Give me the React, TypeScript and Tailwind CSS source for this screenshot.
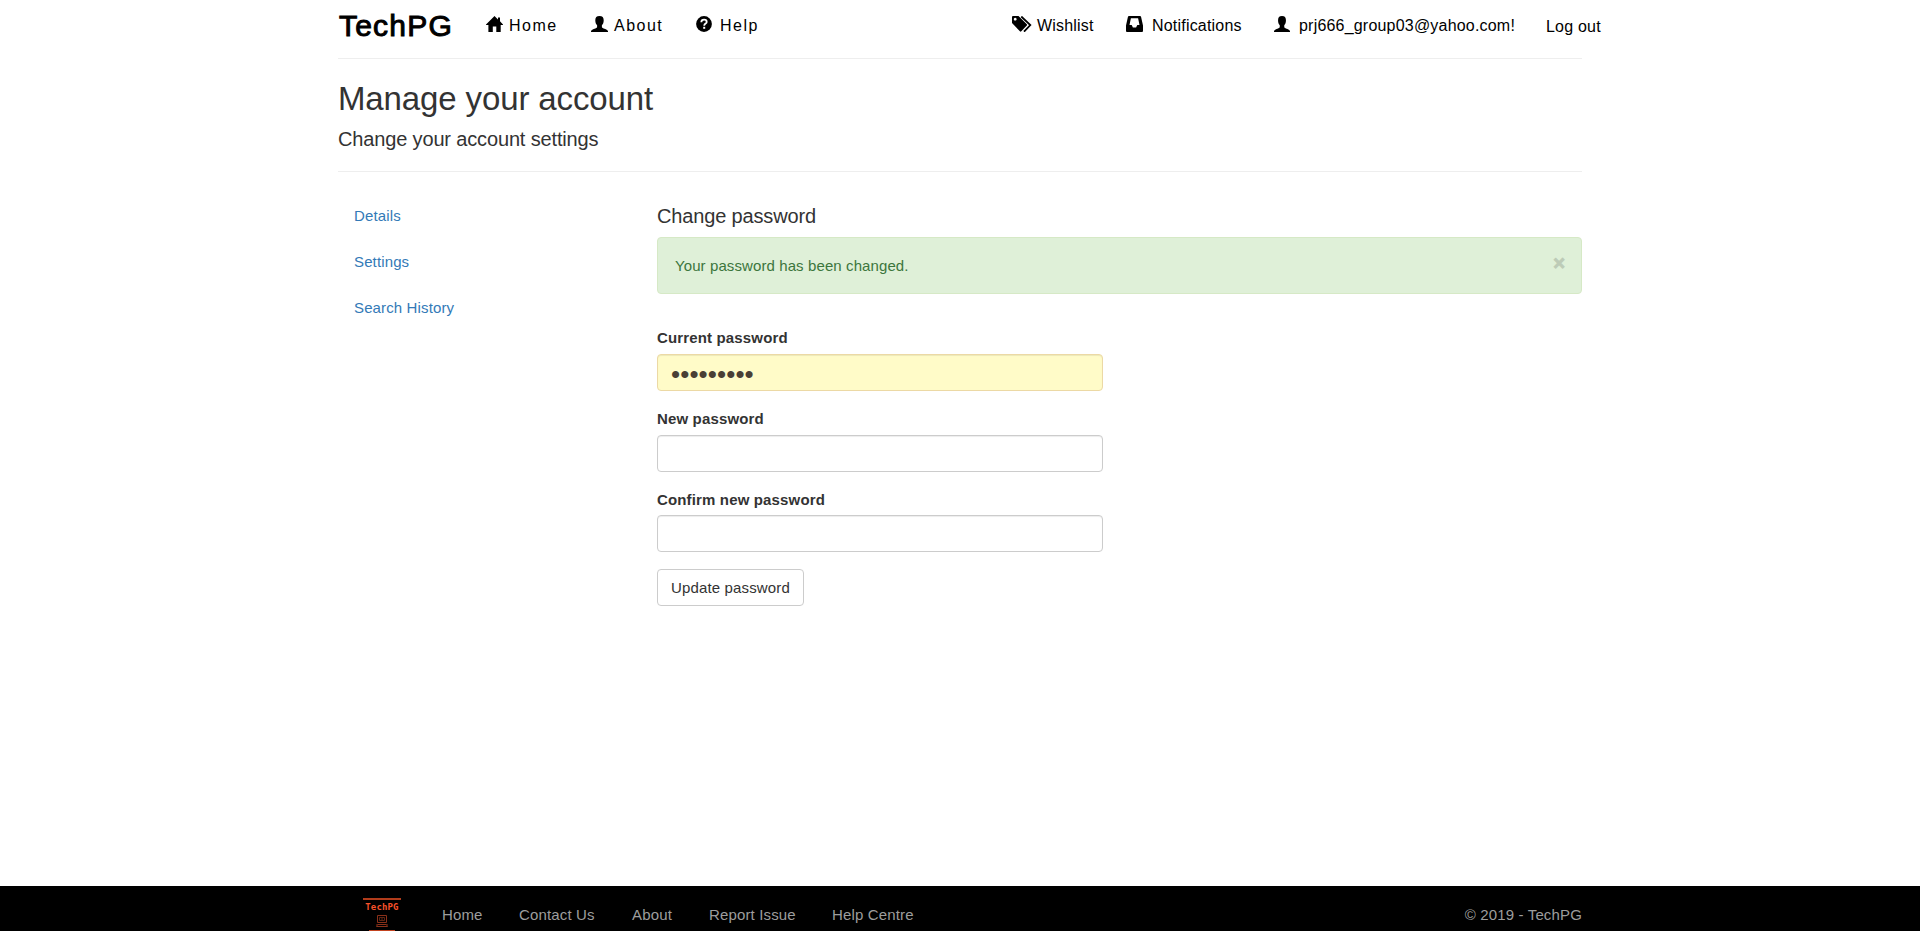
import React from "react";

type IconProps = { className?: string };

const HomeIcon = ({ className }: IconProps) => (
  <svg viewBox="0 0 17 16" className={className} fill="currentColor">
    <path d="M8.500 0 12 3.400V1.500H14V5.300L17 8.400V9H14.700V16H10.300V10.500H6.800V16H2.400V9H0V8.400Z" />
  </svg>
);

const UserIcon = ({ className }: IconProps) => (
  <svg viewBox="0 0 17 16" preserveAspectRatio="none" className={className} fill="currentColor">
    <path d="M8.500 0C11.500 0 12.700 1.600 12.700 4.200 12.700 6.500 12.100 8 10.900 9.300V11C10.900 11.600 11.600 12 12.600 12.400 15 13.200 17 14 17 15.200V16H0V15.200C0 14 2 13.200 4.400 12.400 5.400 12 6.100 11.600 6.100 11V9.300C4.900 8 4.300 6.500 4.300 4.200 4.300 1.600 5.500 0 8.500 0Z" />
  </svg>
);

const HelpIcon = ({ className }: IconProps) => (
  <svg viewBox="0 0 16 16" className={className}>
    <circle cx="8" cy="8" r="7.900" fill="currentColor" />
    <path d="M5.300 6.200C5.300 4.500 6.600 3.700 8.100 3.700 9.700 3.700 10.700 4.700 10.700 5.900 10.700 7.600 8.200 7.500 8.200 9.700" fill="none" stroke="#fff" strokeWidth="1.800" />
    <path d="M7.200 10.800h2v2h-2z" fill="#fff" />
  </svg>
);

const TagsIcon = ({ className }: IconProps) => (
  <svg viewBox="0 0 20 16" className={className}>
    <path fillRule="evenodd" fill="currentColor" d="M0 1Q0 0 1 0H6.500L14.800 8.200Q15.400 8.900 14.800 9.500L9.300 15.300Q8.600 16 7.900 15.300L0 7ZM3.200 1.800a1.400 1.400 0 1 0 .01 0Z" />
    <path d="M9.300 .500 18.300 9.100 12 15.700" fill="none" stroke="currentColor" strokeWidth="1.800" />
  </svg>
);

const InboxIcon = ({ className }: IconProps) => (
  <svg viewBox="0 0 17 16" preserveAspectRatio="none" className={className}>
    <path fillRule="evenodd" fill="currentColor" d="M3 0H14Q14.900 0 15.100 .900L17 9.500V15Q17 16 16 16H1Q0 16 0 15V9.500L1.900 .900Q2.100 0 3 0ZM4.900 2.300 3.500 9H5.700L6.900 11.500H10.100L11.300 9H13.500L12.100 2.300Z" />
  </svg>
);

const FooterLogo = () => (
  <div className="flex h-[33px] w-[38px] flex-col items-center overflow-hidden">
    <div className="h-[2px] w-[38px] shrink-0 bg-[#b23c1b]" />
    <div className="mt-[1px] h-[12px] shrink-0 font-['DejaVu_Sans_Mono',monospace] text-[9px] leading-[12px] font-bold text-[#f8512a]">TechPG</div>
    <svg viewBox="0 0 12 12" className="mt-[2px] h-[12px] w-[12px] shrink-0" fill="none" stroke="#8a3019">
      <path d="M1.500 .500h9v7h-9z" />
      <path d="M3.500 2.500h5v3h-5zM6 2v4" stroke="#5f2415" />
      <path d="M1.500 9.500h9M.500 11.500h11M1 9v3M11 9v3" />
    </svg>
    <div className="mt-[3px] h-[1px] w-[26px] shrink-0 bg-[#c34420]" />
  </div>
);

type FieldProps = { label: string; className: string; labelClass: string; value?: string };

const Field = ({ label, className, labelClass, value }: FieldProps) => (
  <div className="flex flex-col">
    <label className={labelClass}>{label}</label>
    <input type="password" defaultValue={value} className={className} />
  </div>
);

const inputBase =
  "h-[37px] w-[446px] rounded-[4px] border px-[13px] outline-none shadow-[inset_0_1px_1px_rgba(0,0,0,0.075)]";
const labelBase = "text-[15px] leading-[21px] font-bold tracking-[0.15px]";

export default function App() {
  return (
    <div className="flex h-[931px] flex-col overflow-hidden bg-white font-['Liberation_Sans',Arial,sans-serif] text-[15px] tracking-[0.1px] text-[#333]">
      <header className="mx-auto flex h-[59px] w-[1244px] shrink-0 items-start border-b border-[#eee] text-[16px] leading-[20px] text-black">
        <a className="mt-[8px] w-[148px] pl-[1px] text-[30px] leading-[36px] tracking-[1.2px] [-webkit-text-stroke:1px_black]">TechPG</a>
        <nav className="mt-[16px] flex tracking-[1.5px]">
          <a className="flex w-[105px]"><HomeIcon className="mr-[6px] h-[16px] w-[17px]" />Home</a>
          <a className="flex w-[105px]"><UserIcon className="mr-[6px] h-[16px] w-[17px]" />About</a>
          <a className="flex"><HelpIcon className="mr-[8px] h-[16px] w-[16px]" />Help</a>
        </nav>
        <nav className="mt-[16px] -mr-[19px] ml-auto flex tracking-[0.2px]">
          <a className="flex w-[114px]"><TagsIcon className="mr-[5px] h-[16px] w-[20px]" />Wishlist</a>
          <a className="flex w-[148px]"><InboxIcon className="mr-[9px] h-[16px] w-[17px]" />Notifications</a>
          <a className="flex w-[271px]"><UserIcon className="mr-[9px] h-[16px] w-[16px]" />prj666_group03@yahoo.com!</a>
          <a className="mt-[1px] w-[56px] pl-[1px] whitespace-nowrap">Log out</a>
        </nav>
      </header>

      <main className="mx-auto w-[1244px] grow">
        <div className="h-[113px] border-b border-[#eee] pt-[22px]">
          <h2 className="text-[33px] leading-[36px] tracking-[-0.12px]">Manage your account</h2>
          <h4 className="mt-[11px] text-[20px] leading-[22px] tracking-[-0.15px]">Change your account settings</h4>
        </div>
        <div className="flex">
          <nav className="flex w-[319px] flex-col gap-[25px] pt-[33px] pl-[16px] leading-[21px] tracking-[0.13px] text-[#337ab7]">
            <a>Details</a>
            <a>Settings</a>
            <a>Search History</a>
          </nav>
          <section className="w-[925px] pt-[33px]">
            <h4 className="text-[20px] leading-[22px] tracking-[-0.15px]">Change password</h4>
            <div className="mt-[10px] flex h-[57px] justify-between rounded-[4px] border border-[#d6e9c6] bg-[#dff0d8] pt-[17px] pr-[16px] pl-[17px] leading-[21px] text-[#3c763d]">
              <p>Your password has been changed.</p>
              <button className="mt-[-3px] h-[22px] text-[20px] leading-[22px] font-bold text-black opacity-15 [-webkit-text-stroke:1px_black]">×</button>
            </div>
            <form className="mt-[33px] flex flex-col items-start">
              <Field label="Current password" value="abcdefghi" labelClass={labelBase} className={`${inputBase} mt-[6px] border-[#ecd9a5] bg-[#fffbc8] pt-[3px] text-[26px] text-[#4a3f35]`} />
              <Field label="New password" labelClass={`${labelBase} mt-[17px]`} className={`${inputBase} mt-[6px] border-[#ccc]`} />
              <Field label="Confirm new password" labelClass={`${labelBase} mt-[17px]`} className={`${inputBase} mt-[5px] border-[#ccc]`} />
              <button type="button" className="mt-[17px] h-[37px] w-[147px] rounded-[4px] border border-[#ccc] bg-white pt-[1px] tracking-[0.15px]">Update password</button>
            </form>
          </section>
        </div>
      </main>

      <footer className="h-[45px] shrink-0 bg-black text-[#9d9d9d]">
        <div className="mx-auto flex h-[45px] w-[1244px] items-start leading-[21px] tracking-[0.15px]">
          <div className="mt-[12px] ml-[25px] w-[79px]"><FooterLogo /></div>
          <a className="mt-[18px] w-[77px]">Home</a>
          <a className="mt-[18px] w-[113px]">Contact Us</a>
          <a className="mt-[18px] w-[77px]">About</a>
          <a className="mt-[18px] w-[123px]">Report Issue</a>
          <a className="mt-[18px]">Help Centre</a>
          <p className="mt-[18px] ml-auto">© 2019 - TechPG</p>
        </div>
      </footer>
    </div>
  );
}
